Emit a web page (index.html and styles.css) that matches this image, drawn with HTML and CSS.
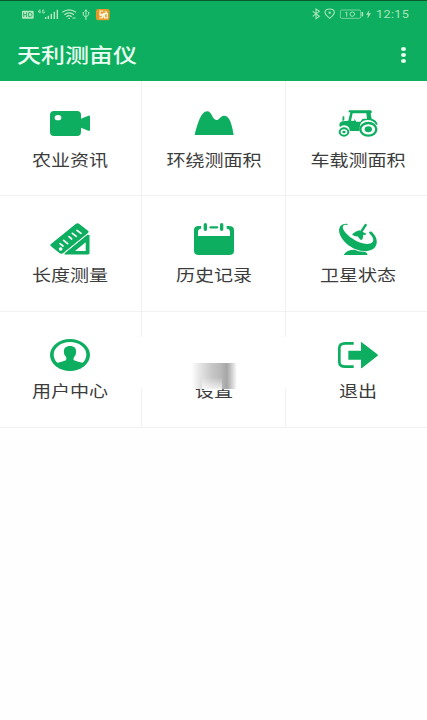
FILE: index.html
```html
<!DOCTYPE html>
<html lang="zh-CN">
<head>
<meta charset="utf-8">
<title>天利测亩仪</title>
<link rel="stylesheet" href="styles.css">
</head>
<body>
<header class="top">
  <div class="status">
    <svg class="status-left" viewBox="60 20 280 44" fill="none" stroke="#b4e8bf" stroke-width="3.6">
      <rect x="66" y="31" width="35" height="24" rx="3" fill="#b4e8bf" stroke="none"/>
      <path d="M71 36v14M80 36v14M71 43h9M86 37v12h5q5 0 5-6t-5-6z" stroke="#16a85a" stroke-width="2.5"/>
      <path d="M119 28l-4 7h7M120 28v11M133 29h-5v9h5v-4h-2" stroke-width="2.4"/>
      <path d="M137 56v-6M145 56V46M154 56V40M163 56V34M172 56V28" stroke-width="4.4"/>
      <path d="M187 36q21-15 41 0M193 43q15-11 29 0M199 49q9-6 16 0M205 54h5M217 53h10"/>
      <path d="M258 30v29M250 37v8l8 6 8-8v-7M254 34l4-6 4 6M248 37h4M264 36h4" stroke-width="3"/>
      <rect x="288" y="26" width="41" height="34" rx="7" fill="#e59a28" stroke="none"/>
      <path d="M310 32h-10v10h9l-3 11h-8M299 47l12-7M315 32l6 5M322 40h-8v13h8zM308 53l5-16" stroke="#fff8df" stroke-width="3.6"/>
    </svg>
    <div class="status-right">
      <svg class="status-icons" viewBox="295 22 185 42" fill="none" stroke="#a9e5b9" stroke-width="3.4">
        <path d="M300 35l20 15-10 7V28l10 7-20 15"/>
        <path d="M351 56q-14-11-14-18 0-10 14-10t14 10q0 7-14 18z"/>
        <circle cx="351" cy="39" r="3.5" fill="#a9e5b9" stroke="none"/>
        <rect x="383" y="31" width="61" height="25" rx="4" stroke-width="2"/>
        <path d="M449 37v13" stroke-width="5"/>
        <path d="M402 37v14M398 39l4-2M412 43q0-6 7-6t7 6-7 7-7-7z" stroke-width="2.8"/>
        <path d="M470 31l-10 14h6l-2 12 11-16h-7z" fill="#a9e5b9" stroke="none"/>
      </svg>
      <span class="clock">12:15</span>
    </div>
  </div>
  <div class="bar">
    <h1 class="title">天利测亩仪</h1>
    <div class="more"><i></i><i></i><i></i></div>
  </div>
</header>
<main class="grid">
  <a class="cell">
    <svg class="icon" viewBox="150 54 120 96"><path d="M162 63h69q12 0 12 12v11l22-9q5-1 5 4v38q0 5-5 3l-22-9v12q0 13-12 13h-69q-12 0-12-13V75q0-12 12-12z"/><ellipse cx="174" cy="83" rx="10" ry="8" fill="#fff"/></svg>
    <span class="label">农业资讯</span>
  </a>
  <a class="cell">
    <svg class="icon" viewBox="156 54 120 96"><path d="M158 135C166 105 176 64 196 64c13 0 15 24 26 26 10 1 13-14 25-13 18 1 24 33 28 58z"/></svg>
    <span class="label">环绕测面积</span>
  </a>
  <a class="cell">
    <svg class="icon" viewBox="159 54 120 96">
      <path d="M192 61h66l3 5-4 5 3 15q16 5 18 18h-5q-8-14-25-14-24 0-24 23l-1 10h-29q0-16-16-17-10 0-13 6l-2-6q0-10 10-12l17-2 6-25h-6zM203 70l-5 22 10 1v-7l6 9h12l7-9h13l-2-16z" fill-rule="evenodd"/>
      <path d="M172 93l1-14h5v12z"/>
      <ellipse cx="177" cy="126" rx="13" ry="11" fill="none" stroke="#0dae5f" stroke-width="6"/><ellipse cx="177" cy="126" rx="5" ry="4"/>
      <ellipse cx="250" cy="118" rx="24" ry="19" fill="none" stroke="#0dae5f" stroke-width="7"/><ellipse cx="250" cy="118" rx="11" ry="9"/>
    </svg>
    <span class="label">车载测面积</span>
  </a>
  <a class="cell">
    <svg class="icon" viewBox="150 54 120 96">
      <path d="M153 117l74-60q6-4 11 0l26 20q4 4-1 8l-73 59q-6 5-12 0l-25-20q-4-4 0-7z"/>
      <path d="M180 116l9 7M191 106l12 10M207 95l8 7M217 85l12 9M231 76l12 9" stroke="#fff" stroke-width="5" stroke-linecap="round"/>
      <circle cx="182" cy="132" r="5.5" fill="#fff"/>
      <path d="M193 144l69-56h8v56q0 6-6 6h-67q-10 0-4-6z" stroke="#fff" stroke-width="3"/><path d="M225 138l32-26v26z" fill="#fff"/>
    </svg>
    <span class="label">长度测量</span>
  </a>
  <a class="cell">
    <svg class="icon" viewBox="156 54 120 96"><path d="M156 75q0-12 14-12h7v8q-9 1-9 10v12h96V81q0-9-10-10v-8h7q15 0 15 12v62q0 13-15 13h-90q-15 0-15-13z"/><path d="M190 59v14M239 59v14" stroke="#0dae5f" stroke-width="10" stroke-linecap="round"/><path d="M206 67h19" stroke="#0dae5f" stroke-width="7" stroke-linecap="round"/></svg>
    <span class="label">历史记录</span>
  </a>
  <a class="cell">
    <svg class="icon" viewBox="159 54 120 96">
      <path d="M186 56q-12-1-19 6c-10 12-4 35 18 54 23 20 58 29 78 17 16-10 17-33 0-50q-4-5-9-3-4 3 1 7c11 12 12 19 7 25-10 10-39 4-61-12-23-16-34-34-24-40q4-1 9 0 5-1 0-4z"/>
      <path d="M242 60l-12 18" stroke="#0dae5f" stroke-width="7" stroke-linecap="round"/><path d="M203 86q10-8 20-10l12 6 9 4-3 4-6-1-2 12q-3 5-7 3l-8-10q-8 1-14-3-4-2-1-5z"/>
      <path d="M176 150q8-16 33-16 10 6 26 6 11 0 13 10z"/>
    </svg>
    <span class="label">卫星状态</span>
  </a>
  <a class="cell">
    <svg class="icon" viewBox="150 40 120 96"><ellipse cx="210" cy="88" rx="60" ry="48"/><ellipse cx="210" cy="87" rx="49" ry="38" fill="#fff"/><path d="M170 112q16-3 28-8 4-5-1-12-5-4-5-11c-2-14 6-20 18-20s20 6 18 20q0 8-5 12-5 7-1 11 12 5 28 8-15 19-40 19t-40-19z"/></svg>
    <span class="label">用户中心</span>
  </a>
  <a class="cell">
    <span class="icon"></span>
    <span class="label">设置</span>
    <span class="veil"></span>
  </a>
  <a class="cell">
    <svg class="icon" viewBox="159 41 120 96"><path d="M206 54h-25q-18 0-18 14v42q0 14 18 14h25" fill="none" stroke="#0dae5f" stroke-width="8"/><path d="M190 76h38V52q0-4 4 0l45 35q3 3 0 5l-45 35q-4 4-4-1v-23h-38z"/></svg>
    <span class="label">退出</span>
  </a>
</main>
</body>
</html>
```

FILE: styles.css
```css
body {
  margin: 0;
  background: #fefefe;
  font-family: "Noto Sans CJK SC", sans-serif;
  color: #3c3c3c;
  overflow: hidden;
}

.top {
  box-sizing: border-box;
  height: 81px;
  background: #0dae5f;
  border-top: 1px solid #075b2c;
}

.status {
  height: 27px;
  display: flex;
  justify-content: space-between;
  padding: 0 17px 0 20px;
}

.status-left {
  width: 93.3px;
  height: 14.7px;
  margin-top: 6px;
}

.status-right {
  display: flex;
  gap: 3px;
}

.status-icons {
  width: 61.7px;
  height: 14px;
  margin-top: 6px;
}

.clock {
  width: 34px;
  font: 11px/14px Roboto, sans-serif;
  margin-top: 7px;
  letter-spacing: 0.3px;
  color: #a9e5b9;
  transform: scaleX(1.15);
  transform-origin: left;
}

.bar {
  height: 53px;
  display: flex;
  align-items: center;
  justify-content: space-between;
  padding: 0 21px 0 17px;
}

.title {
  margin: 1px 0 0;
  font-size: 20px;
  line-height: 28px;
  font-weight: 500;
  color: #eafff2;
  transform: scaleX(1.2);
  transform-origin: left;
}

.more {
  display: grid;
  gap: 2px;
}

.more i {
  width: 5px;
  height: 4px;
  border-radius: 50%;
  background: #eafff2;
}

.grid {
  display: grid;
  grid-template-columns: 142px 144px 144px;
  grid-template-rows: 115px 116px 116px;
}

.cell {
  position: relative;
  box-sizing: border-box;
  display: flex;
  flex-direction: column;
  align-items: center;
  padding: 27px 0 0 1px;
  background: #fff;
  border-right: 1px solid #f1f1f1;
  border-bottom: 1px solid #f1f1f1;
}

.cell:nth-child(3n + 1) {
  padding: 27px 1px 0 0;
}

.icon {
  width: 40px;
  height: 32px;
  flex: none;
  fill: #0dae5f;
}

.label {
  font-size: 16px;
  line-height: 24px;
  margin-top: 7px;
  white-space: nowrap;
  transform: scaleX(1.19);
}

.veil {
  position: absolute;
  left: -1px;
  top: 25px;
  width: 145px;
  height: 52px;
  background:
    linear-gradient(to bottom, transparent 55%, rgba(255, 255, 255, 0.75)) 61px 26px / 20px 26px no-repeat,
    linear-gradient(to right, transparent, #e4e4e4 20%, #c7c7c7 45%, #b8b8b8 65%, #a6a6a6 78%, #c8c8c8 87%, transparent) 50px 26px / 46px 26px no-repeat,
    #fff;
}
```
